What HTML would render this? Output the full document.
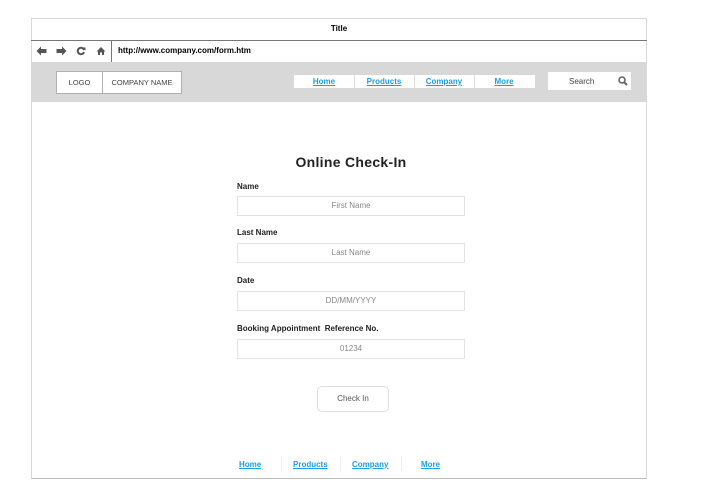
<!DOCTYPE html>
<html><head><style>
*{margin:0;padding:0;box-sizing:border-box}
body{width:711px;height:495px;background:#fff;font-family:"Liberation Sans",Arial,sans-serif;position:relative;overflow:hidden}
.a{position:absolute}
.lnk{color:#1a9ee8;text-decoration:underline;font-size:8px;font-weight:bold}
.lbl{font-size:8px;font-weight:bold;color:#222}
.inp{border:1px solid #e2e2e2;height:20px;width:228px;left:237px;font-size:8px;color:#888;text-align:center;line-height:18px}
</style></head><body>
<div class="a" style="left:31px;top:18px;width:616px;height:461px;border:1px solid #d8d8d8;border-bottom:1px solid #bbb"></div>
<div class="a" style="left:31px;top:24px;width:616px;text-align:center;font-size:8px;font-weight:bold">Title</div>
<div class="a" style="left:31px;top:40px;width:616px;height:1px;background:#777"></div>
<div class="a" style="left:111px;top:40px;width:1px;height:22px;background:#777"></div>
<svg class="a" style="left:36px;top:46px" width="11" height="10" viewBox="0 0 11 10"><path d="M0.5 5L5 0.5V3H10.5V7H5V9.5Z" fill="#555"/></svg>
<svg class="a" style="left:56px;top:46px" width="11" height="10" viewBox="0 0 11 10"><path d="M10.5 5L6 0.5V3H0.5V7H6V9.5Z" fill="#555"/></svg>
<svg class="a" style="left:76px;top:46px" width="10" height="10" viewBox="0 0 10 10"><path d="M8 4A3.2 3.2 0 1 0 8 6" stroke="#555" stroke-width="2" fill="none"/><path d="M6.5 1.5L9.5 1.5 9.5 4.5Z" fill="#555"/></svg>
<svg class="a" style="left:96px;top:46px" width="10" height="10" viewBox="0 0 10 10"><path d="M5 1L0.5 5.5H2V9H4V6.5H6V9H8V5.5H9.5Z" fill="#555"/></svg>
<div class="a" style="left:118px;top:46px;font-size:8px;font-weight:bold">http://www.company.com/form.htm</div>
<div class="a" style="left:32px;top:62px;width:614px;height:40px;background:#d8d8d8"></div>
<div class="a" style="left:56px;top:71px;width:126px;height:23px;background:#fff;border:1px solid #b0b0b0"></div>
<div class="a" style="left:102px;top:71px;width:1px;height:23px;background:#b0b0b0"></div>
<div class="a" style="left:57px;top:78px;width:45px;text-align:center;font-size:7.5px;color:#444">LOGO</div>
<div class="a" style="left:103px;top:78px;width:78px;text-align:center;font-size:7.5px;color:#444">COMPANY NAME</div>
<div class="a" style="left:294px;top:75px;width:241px;height:13px;background:#fff"></div>
<div class="a" style="left:354px;top:75px;width:1px;height:13px;background:#ddd"></div>
<div class="a" style="left:414px;top:75px;width:1px;height:13px;background:#ddd"></div>
<div class="a" style="left:474px;top:75px;width:1px;height:13px;background:#ddd"></div>
<div class="a lnk" style="left:294px;top:77px;width:60px;text-align:center">Home</div>
<div class="a lnk" style="left:354px;top:77px;width:60px;text-align:center">Products</div>
<div class="a lnk" style="left:414px;top:77px;width:60px;text-align:center">Company</div>
<div class="a lnk" style="left:474px;top:77px;width:60px;text-align:center">More</div>
<div class="a" style="left:548px;top:72px;width:83px;height:18px;background:#fff"></div>
<div class="a" style="left:569px;top:77px;font-size:8px;color:#444">Search</div>
<svg class="a" style="left:618px;top:76px" width="10" height="10" viewBox="0 0 10 10"><circle cx="4" cy="4" r="3" stroke="#666" stroke-width="1.6" fill="none"/><path d="M6 6L9 9" stroke="#666" stroke-width="2"/></svg>
<div class="a" style="left:237px;top:154px;width:228px;text-align:center;font-size:14px;font-weight:bold;color:#222;letter-spacing:0.3px">Online Check-In</div>
<div class="a lbl" style="left:237px;top:182px">Name</div>
<div class="a inp" style="top:196px">First Name</div>
<div class="a lbl" style="left:237px;top:228px">Last Name</div>
<div class="a inp" style="top:243px">Last Name</div>
<div class="a lbl" style="left:237px;top:276px">Date</div>
<div class="a inp" style="top:291px">DD/MM/YYYY</div>
<div class="a lbl" style="left:237px;top:324px">Booking Appointment&nbsp; Reference No.</div>
<div class="a inp" style="top:339px">01234</div>
<div class="a" style="left:317px;top:386px;width:72px;height:26px;border:1px solid #ddd;border-radius:5px;text-align:center;line-height:24px;font-size:8px;color:#555">Check In</div>
<div class="a lnk" style="left:239px;top:460px">Home</div>
<div class="a lnk" style="left:293px;top:460px">Products</div>
<div class="a lnk" style="left:352px;top:460px">Company</div>
<div class="a lnk" style="left:421px;top:460px">More</div>
<div class="a" style="left:281px;top:456px;width:1px;height:15px;background:#eee"></div>
<div class="a" style="left:340px;top:456px;width:1px;height:15px;background:#eee"></div>
<div class="a" style="left:401px;top:456px;width:1px;height:15px;background:#eee"></div>
</body></html>
